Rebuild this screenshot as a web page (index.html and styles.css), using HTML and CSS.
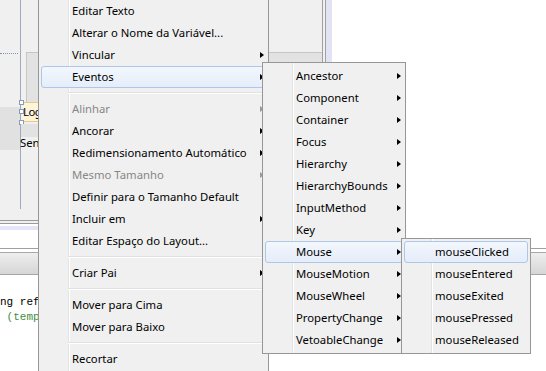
FILE: index.html
```html
<!DOCTYPE html>
<html>
  <head>
    <title>Eventos</title>
    <link rel="stylesheet" href="styles.css">
  </head>
  <body>
    <div class="ide">
      <div class="designer">
        <div class="form-area">
          <div class="guide-v"></div>
          <div class="guide-dots"></div>
          <div class="side-block"></div>
          <div class="comp-panel"></div>
          <div class="comp-label">Log</div>
          <div class="handle handle-top"></div>
          <div class="handle handle-mid"></div>
          <div class="handle handle-bottom"></div>
          <div class="comp-bar"></div>
          <div class="comp-text">Sen</div>
        </div>
        <div class="edge"></div>
        <div class="canvas"></div>
      </div>
      <div class="designer-bottom"></div>
      <div class="blank"></div>
      <div class="tabbar"></div>
      <pre class="code"><span>ng ref</span>
<span class="green"> (temp</span></pre>
    </div>

    <!-- context menu -->
    <div class="menu main-menu">
      <div class="item">Editar Texto</div>
      <div class="item">Alterar o Nome da Variável...</div>
      <div class="item has-sub">Vincular</div>
      <div class="item has-sub active">Eventos</div>
      <div class="sep"></div>
      <div class="item has-sub disabled">Alinhar</div>
      <div class="item has-sub">Ancorar</div>
      <div class="item has-sub">Redimensionamento Automático</div>
      <div class="item has-sub disabled">Mesmo Tamanho</div>
      <div class="item">Definir para o Tamanho Default</div>
      <div class="item has-sub">Incluir em</div>
      <div class="item">Editar Espaço do Layout...</div>
      <div class="sep"></div>
      <div class="item has-sub">Criar Pai</div>
      <div class="sep"></div>
      <div class="item">Mover para Cima</div>
      <div class="item">Mover para Baixo</div>
      <div class="sep"></div>
      <div class="item">Recortar</div>
    </div>

    <div class="menu sub-events">
      <div class="item has-sub">Ancestor</div>
      <div class="item has-sub">Component</div>
      <div class="item has-sub">Container</div>
      <div class="item has-sub">Focus</div>
      <div class="item has-sub">Hierarchy</div>
      <div class="item has-sub">HierarchyBounds</div>
      <div class="item has-sub">InputMethod</div>
      <div class="item has-sub">Key</div>
      <div class="item has-sub active">Mouse</div>
      <div class="item has-sub">MouseMotion</div>
      <div class="item has-sub">MouseWheel</div>
      <div class="item has-sub">PropertyChange</div>
      <div class="item has-sub">VetoableChange</div>
    </div>

    <div class="menu sub-mouse">
      <div class="item active">mouseClicked</div>
      <div class="item">mouseEntered</div>
      <div class="item">mouseExited</div>
      <div class="item">mousePressed</div>
      <div class="item">mouseReleased</div>
    </div>
  </body>
</html>
```

FILE: styles.css
```css
body {
  margin: 0;
  width: 546px;
  height: 371px;
  overflow: hidden;
  position: relative;
  background: #fff;
  font-family: "Noto Sans", sans-serif;
  font-size: 11.3px;
}

.ide {
  display: flex;
  flex-direction: column;
  height: 371px;
}

/* designer area */
.designer {
  display: flex;
  height: 220px;
}

.form-area {
  position: relative;
  width: 322px;
  background: #f0f0f0;
  overflow: hidden;
}

.edge {
  width: 10px;
  background: linear-gradient(to right, #a0a0a0 0 1px, #f0f0f0 1px 3px, #a0a0a0 3px 4px, #e2e3f5 4px 10px);
}

.canvas {
  flex: 1;
  background: #fff;
}

.guide-v {
  position: absolute;
  left: 20px;
  top: 0;
  width: 1px;
  height: 209px;
  background: #9eabbb;
}

.guide-dots {
  position: absolute;
  left: 0;
  top: 53px;
  width: 18px;
  border-top: 1px dotted #8393aa;
}

.side-block {
  position: absolute;
  left: 0;
  top: 107px;
  width: 20px;
  height: 43px;
  background: #e1e1e1;
}

.comp-panel {
  position: absolute;
  left: 26px;
  top: 52px;
  width: 300px;
  height: 50px;
  background: #e2e2e2;
  border: 1px solid #c6c6c6;
}

.comp-label {
  position: absolute;
  left: 22px;
  top: 102px;
  width: 300px;
  height: 18px;
  line-height: 18px;
  padding-left: 1px;
  background: #fdf4dc;
  border-top: 1px solid #f1c77a;
  border-bottom: 1px solid #f1c77a;
  color: #000;
  letter-spacing: -0.5px;
}

.handle {
  position: absolute;
  left: 19px;
  width: 3px;
  height: 3px;
  background: #fff;
  border: 1px solid #8a9db8;
}

.handle-top { top: 100px; }
.handle-mid { top: 109px; }
.handle-bottom { top: 120px; }

.comp-bar {
  position: absolute;
  left: 21px;
  top: 124px;
  width: 300px;
  height: 13px;
  background: #e2e2e2;
}

.comp-text {
  position: absolute;
  left: 20px;
  top: 135px;
  line-height: 16px;
  color: #000;
}

.designer-bottom {
  width: 332px;
  height: 10px;
  background: linear-gradient(#9a9a9a 0 1px, #f0f0f0 1px 3px, #9a9a9a 3px 4px, #fff 4px 6px, #e5e5f8 6px 10px);
}

.blank {
  height: 18px;
}

.tabbar {
  height: 25px;
  border-top: 1px solid #a0a0a0;
  border-bottom: 1px solid #a6a6a6;
  background: linear-gradient(#fff 0 3px, #a8a8a8 3px 4px, #eeeeee 4px, #d6d6d6);
}

.code {
  margin: 0;
  padding-top: 20px;
  font-family: "Liberation Mono", monospace;
  font-size: 11px;
  line-height: 15px;
  color: #000;
}

.code .green {
  color: #3f8f3f;
}

/* popup menus */
.menu {
  position: absolute;
  padding: 2px;
  border: 1px solid #979797;
  background-color: #f0f0f0;
  background-image: linear-gradient(to right, transparent 29px, #e2e3e3 29px 30px, #fff 30px 31px, transparent 31px);
  color: #000;
}

.main-menu {
  left: 38px;
  top: -3px;
  width: 225px;
}

.sub-events {
  left: 262px;
  top: 62px;
  width: 138px;
}

.sub-mouse {
  left: 401px;
  top: 238px;
  width: 124px;
}

.item {
  box-sizing: border-box;
  display: flex;
  align-items: center;
  justify-content: space-between;
  height: 22px;
  padding: 0 1px 1px 30px;
  border: 1px solid transparent;
  border-radius: 3px;
  white-space: nowrap;
}

.item.has-sub::after {
  content: "";
  width: 0;
  height: 0;
  margin-top: 1px;
  border-left: 4px solid #000;
  border-top: 3.5px solid transparent;
  border-bottom: 3.5px solid transparent;
}

.item.disabled {
  color: #878787;
}

.item.disabled::after {
  border-left-color: #9a9a9a;
}

.item.active {
  border-color: #aec7e8;
  background: linear-gradient(#f3f7fd, #e4edf9);
}

.sep {
  height: 1px;
  margin: 4px 0 4px 27px;
  background: #e0e0e0;
  border-bottom: 1px solid #fff;
}
```
